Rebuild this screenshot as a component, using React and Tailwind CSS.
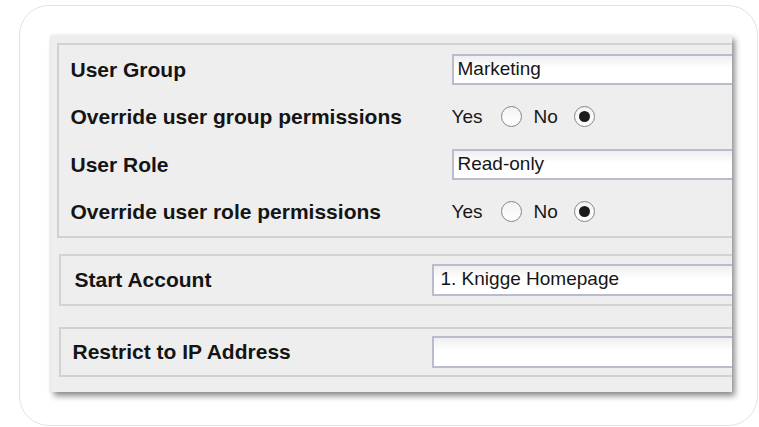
import React from 'react'

const labelCls = "font-bold text-[21px] text-[#141414] whitespace-nowrap"
const inputCls = "h-[31px] w-[340px] shrink-0 border-2 border-[#b9bccd] bg-linear-to-b from-[#efefef] to-white to-45% text-[19px] text-[#161616] flex items-center"

const Radio = ({ checked }) => (
  <span className={`w-[21px] h-[21px] rounded-full border border-[#858585] bg-linear-to-b from-[#f3f3f3] to-white flex items-center justify-center ${checked ? 'border-[#6f6f6f]' : ''}`}>
    {checked && <span className="w-[11px] h-[11px] rounded-full bg-[#1b1b1b]" />}
  </span>
)

const YesNo = () => (
  <div className="flex items-center text-[19px] text-[#161616]">
    <span>Yes</span>
    <span className="ml-[18px]"><Radio /></span>
    <span className="ml-[12px]">No</span>
    <span className="ml-[16px]"><Radio checked /></span>
  </div>
)

const Row = ({ label, children }) => (
  <div className="flex items-center">
    <div className={`${labelCls} w-[381px] shrink-0`}>{label}</div>
    {children}
  </div>
)

const App = () => {
  return (
    <div className="w-[759px] h-[427px] bg-white pt-[5px] pl-[19px] overflow-hidden" style={{ fontFamily: '"Liberation Sans", Arial, sans-serif' }}>
      <div className="w-[739px] h-[421px] rounded-[30px] border-[1.5px] border-[#e1e1e1] bg-white pt-[28.5px] pl-[30.5px]">
        <div className="w-[681px] h-[357px] bg-[#eeeeee] overflow-hidden pl-[6px] pt-[8px] shadow-[3px_4px_6px_rgba(0,0,0,0.45),-1px_0_2px_rgba(0,0,0,0.06)]">
          {/* user group / role */}
          <div className="w-[700px] h-[195px] border-2 border-[#d2d2d2] pl-[12px] pt-[1px] grid grid-rows-4">
            <Row label="User Group">
              <div className={`${inputCls} pl-[4px]`}>Marketing</div>
            </Row>
            <Row label="Override user group permissions">
              <YesNo />
            </Row>
            <Row label="User Role">
              <div className={`${inputCls} pl-[4px]`}>Read-only</div>
            </Row>
            <Row label="Override user role permissions">
              <YesNo />
            </Row>
          </div>

          <div className="ml-[2px] mt-[16px] w-[700px] h-[52px] border-2 border-[#d2d2d2] pl-[14px] flex items-center">
            <div className={`${labelCls} w-[357px] shrink-0`}>Start Account</div>
            <div className={`${inputCls} h-[32px] pl-[7px]`}>1. Knigge Homepage</div>
          </div>

          <div className="ml-[2px] mt-[21px] w-[700px] h-[50px] border-2 border-[#d2d2d2] pl-[12px] flex items-center">
            <div className={`${labelCls} w-[359px] shrink-0`}>Restrict to IP Address</div>
            <div className={`${inputCls} h-[32px]`}></div>
          </div>
        </div>
      </div>
    </div>
  )
}

export default App
